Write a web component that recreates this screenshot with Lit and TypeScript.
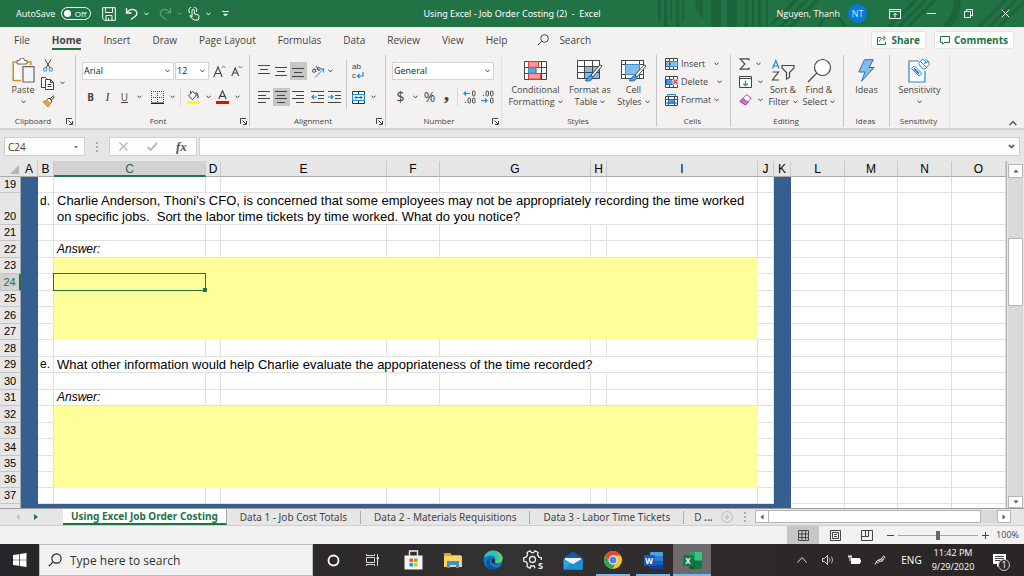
import { LitElement, html, svg, css, nothing, TemplateResult } from "lit";
import { customElement, state } from "lit/decorators.js";
import { classMap } from "lit/directives/class-map.js";

const icon = (w: number, h: number, body: TemplateResult) =>
  html`<svg width=${w} height=${h} viewBox="0 0 ${w} ${h}" fill="none" stroke="#444" aria-hidden="true">${body}</svg>`;

const chev = (color = "#444") =>
  html`<svg width="5" height="4" viewBox="0 0 5 4" fill="none" stroke=${color} aria-hidden="true"><path d="M0.5 0.7 2.5 2.9 4.5 0.7" /></svg>`;

const launcher = () =>
  icon(7, 7, svg`<path d="M0.5 6V0.5H6M2.5 2.5 6 6M6.5 3v3.5H3" />`);

const alignLines = (rows: number[][]) =>
  icon(13, 12, svg`${rows.map(([x1, x2, y]) => svg`<path d="M${x1} ${y}.5H${x2}" />`)}`);

const indent = (right: boolean) =>
  icon(13, 12, svg`<path d="M0 .5h13M7 4.5h6M7 7.5h6M0 11.5h13" />
    <path stroke="#1e88d8" stroke-width="1.2" d=${right ? "M0 6h5M3 4l2 2-2 2" : "M6 6H1M3 4 1 6l2 2"} />`);

const I = {
  save: icon(14, 14, svg`<g stroke="#fff"><path d="M.7.7h12.6v12.6H2.5L.7 11.5z" /><path d="M3.5 1v4.5h7V1M4 13V8.5h6V13M6.5 13v-2" /></g>`),
  undo: icon(14, 13, svg`<path stroke="#fff" stroke-width="1.3" d="M1.5 1v5h5M1.7 5.7C4 2.5 8 1.500 10.500 3.500c2 1.800 1.800 4.500-.5 6L6 12.500" />`),
  redo: icon(14, 13, svg`<path stroke="#5f9f7a" stroke-width="1.2" d="M12.500 1v5h-5M12.300 5.700C10 2.500 6 1.500 3.500 3.500c-2 1.800-1.800 4.500.5 6l4 3" />`),
  touch: icon(12, 14, svg`<g stroke="#fff"><path d="M1.700 6A4 4 0 1 1 8.500 5M4 10V3.500a1.200 1.200 0 0 1 2.400 0V7l3.600.8c1 .3 1.200 1 1 2L10.300 13H6L2 9.500c-.5-.8.500-1.500 1.200-1z" /></g>`),
  customize: icon(7, 6, svg`<g stroke="#fff"><path d="M0 .5h7" /><path fill="#fff" d="M1.500 3h4L3.500 5z" stroke-width=".6" /></g>`),
  ribbonMode: icon(12, 10, svg`<g stroke="#fff"><path d="M.5.500h11v9H.500zM.5 2.500h11M6 8.500V4.500M4.300 6 6 4.300 7.700 6" /></g>`),
  minimize: icon(9, 9, svg`<path stroke="#fff" d="M0 4.500h9" />`),
  restore: icon(9, 9, svg`<path stroke="#fff" d="M.5 2.500h6v6h-6zM2.500 2.500v-2h6v6h-2" />`),
  close: icon(9, 9, svg`<path stroke="#fff" d="m.7.7 7.600 7.600m0-7.600L.7 8.300" />`),
  search: icon(12, 12, svg`<circle cx="7.500" cy="4.500" r="3.800" /><path d="M4.800 7.200.7 11.300" />`),
  share: icon(10, 10, svg`<path stroke="#217346" d="M4 2.500H.500v7h8V7M2.500 6.500c.5-2.500 2-3.500 4.500-3.500M6 .7 8.500 3 6 5.300" />`),
  comment: icon(10, 9, svg`<path stroke="#217346" d="M.5.500h9v6H4L2.500 8.300V6.500h-2z" />`),
  paste: icon(23, 26, svg`<path stroke="#e08a1e" stroke-width="1.600" d="M5 4H1.200v18.500H9M14 4h4.800v3" fill="#fff" /><path fill="#fff" stroke="#666" d="M5 2.500h2.500a2.500 2.500 0 0 1 5 0H15V6H5z" /><path fill="#f5f5f5" stroke="#666" stroke-width="1.200" d="M11 8.600h11V24H11z" />`),
  cut: icon(10, 13, svg`<path d="M2 .5 7 9M8 .5 3 9" /><g stroke="#1e88d8"><circle cx="2.200" cy="10.500" r="1.700" /><circle cx="7.800" cy="10.500" r="1.700" /></g>`),
  copy: icon(14, 13, svg`<path fill="#fff" d="M6.500 10.500h-6V.500h4l2 2" /><path fill="#fff" d="M4.500 2.500h5l3 3v7h-8zM9.500 2.500v3h3M6.500 7.500h4M6.500 9.500h4" />`),
  brush: icon(13, 13, svg`<path fill="#f3a33c" stroke="#d9822b" d="M1 6.500 5.500 5 9 8l-3 4z" /><path fill="#fff" d="M5 4.500 7 3l3 3-1.500 2M8.200 4 11 .7l1.300 1.200-3 3.200" />`),
  borders: icon(13, 13, svg`<path stroke-dasharray="1 1" d="M0 .5h12.500v12M.5 0v12M6.500 0v12M0 6.500h13" /><path stroke="#222" stroke-width="1.500" d="M0 12.300h13" />`),
  fill: icon(13, 14, svg`<path fill="#fff" d="M5.500 1.500 1.500 6l4 3.500 4-4.500zM3.500 3V.7" /><path stroke="#1e68b8" stroke-width="1.400" d="M8.500 3c2 0 2.500 1.500 2.500 5" /><path fill="#ffff00" stroke="none" d="M0 11h13v3H0z" />`),
  fontColor: icon(13, 14, svg`<path stroke-width="1.200" d="M2.800 9 6.500.8 10.200 9M4 6.300h5" /><path fill="#f00" stroke="none" d="M0 11h13v3H0z" />`),
  grow: icon(13, 13, svg`<path stroke-width="1.100" d="M.8 12 5 2l4.200 10M2.300 8.500h5.500" /><path stroke="#1e88d8" d="m8.500 3 2-2 2 2" />`),
  shrink: icon(12, 12, svg`<path stroke-width="1.100" d="M.8 11 4.200 3l3.500 8M2 8h4.500" /><path stroke="#1e88d8" d="m7.500 1 2 2 2-2" />`),
  orient: icon(14, 13, svg`<g stroke-width=".9"><circle cx="3" cy="5.800" r="1.600" /><path d="M3.500 3.500 5 7M5 1l3 4.500" /><circle cx="7.600" cy="3.800" r="1.500" /></g><path stroke="#1e88d8" d="M4 12.500 12.500 4M9 3.800h3.700V7.500" />`),
  wrap: html`<span class="wrapicon" aria-hidden="true"><span>ab</span><span>c<svg width="8" height="7" viewBox="0 0 8 7" fill="none" stroke="#1e88d8" stroke-width="1.200"><path d="M7 0v4H1.500M3.500 2l-2 2 2 2" /></svg></span></span>`,
  merge: icon(13, 13, svg`<path d="M.5.500h12v12H.500z" fill="#fff" stroke="#333" /><path stroke="#333" d="M6.500 0v3M6.500 10v3" /><path fill="#e6f2fb" stroke="#1e88d8" d="M.5 3.500h12v6H.500z" /><path stroke="#1e68b8" d="M3 6.500h7M4.500 5 3 6.500 4.500 8M8.500 5 10 6.500 8.500 8" />`),
  cond: icon(23, 19, svg`<path fill="#fff" d="M.5.500h22v18H.500zM.5 6.500h22M.5 12.500h22M5.500 0v18M17.500 0v18M12 0v18" /><path fill="#ff9a9a" stroke="#e03c3c" d="M4.500.7h10v5.600h-10zM4.500 12.600h12v5.600h-12z" /><path fill="#5ba9e6" stroke="#3a8fd4" d="M4.500 6.800h7v5.400h-7z" />`),
  fmtTable: icon(25, 22, svg`<path fill="#fff" d="M.5.500h22v18H.500z" /><path fill="#84bdec" stroke="none" d="M7 7h16v12H7z" /><path d="M.5.500h22v18H.500zM0 6.500h22M0 12.500h22M7.500 0v18M15.500 0v18" /><path fill="#fff" d="m23 5-9 10 2 2 9-11z" /><path fill="#4a9ee0" stroke="#1e68b8" d="M13.500 15.500c-2 0-2.500 3-5.500 5 3 1 7 .5 8-3z" />`),
  cellStyles: icon(25, 22, svg`<path fill="#fff" d="M.5.500h22v18H.500z" /><path d="M.5.500h22v18H.500zM0 4.500h22M4.500 0v18M0 14.500h22M18.500 0v18" /><path fill="#84bdec" stroke="#3a8fd4" d="M4.500 4.500h14v10h-14z" /><path fill="#fff" d="m23 5-9 10 2 2 9-11z" /><path fill="#4a9ee0" stroke="#1e68b8" d="M13.500 15.500c-2 0-2.500 3-5.500 5 3 1 7 .5 8-3z" />`),
  insert: icon(13, 12, svg`<path fill="#fff" d="M.5.500h12v11H.500zM0 3.500h13M0 8.500h13M4.500 0v12M8.500 0v12" /><path fill="#84bdec" stroke="#3a8fd4" d="M5 3.500h7.500v5H5z" /><path stroke="#1e68b8" d="M6 6H.700M2.700 4l-2 2 2 2" />`),
  remove: icon(13, 12, svg`<path fill="#fff" d="M.5.500h12v11H.500zM0 3.500h13M0 8.500h13M4.500 0v12M8.500 0v12" /><path fill="#4a9ee0" stroke="#1e68b8" d="M1.500 3.500h6v5h-6z" /><path stroke="#f3f2f1" stroke-width="3.500" d="m8 3.500 5 5m0-5-5 5" /><path stroke="#e03c3c" stroke-width="1.300" d="m8.500 3.500 4 4.500m0-4.500-4 4.500" />`),
  format: icon(13, 13, svg`<path stroke="#1e88d8" d="M2.500 2.500V.5h8v2" /><path fill="#fff" d="M.5 2.500h12v9H.500zM0 5.500h13M0 9h13M3.500 2v10M9.500 2v10" /><path fill="#4a9ee0" stroke="#1e68b8" d="M3.500 5.500h6V9h-6z" />`),
  sum: icon(11, 12, svg`<path stroke-width="1.200" d="M10 2.500V.800H1L5.800 6 1 11.200h9V9.500" />`),
  fillDown: icon(13, 12, svg`<path fill="#fff" d="M.5.500h12v11H.500zM0 2.500h13" /><path stroke="#1e88d8" stroke-width="1.200" d="M6.500 4.500v5M4.300 7.500l2.200 2.200 2.200-2.200" />`),
  eraser: icon(13, 12, svg`<path fill="#fff" stroke="#a64ca6" d="M7.500.7 12.300 4 6.500 11 1 7.500z" /><path fill="#c77bc7" stroke="#a64ca6" d="M4 4.500 9 8.200 6.500 11 1 7.500z" />`),
  sort: icon(24, 23, svg`<path stroke="#1e88d8" stroke-width="1.200" d="M1.500 9.500 4.800 1.500 8 9.500M2.800 7h4" /><path stroke-width="1.200" d="M1.500 13h6l-6 8H8" /><path stroke-width="1.200" d="M11 6.500h12V9l-4.500 4.500v5l-3 1.500v-6.500L11 9z" />`),
  find: icon(25, 25, svg`<circle cx="15.500" cy="9.500" r="8" stroke-width="1.200" fill="#fff" /><path stroke-width="1.200" d="M9.700 15.200 1 24" />`),
  ideas: icon(17, 23, svg`<path fill="#84bdec" stroke="#1e78c8" d="M6.500.700h8.800L11 8.500h5.200L3.500 22.300 7 13H.800z" />`),
  sens: icon(22, 25, svg`<path fill="#fff" stroke="#1e88d8" stroke-width="1.200" d="M11 3H1v21h16V13" /><g stroke="#1e88d8"><path fill="#fff" d="m3.500 10.500 3-2.500 7.500 7.500-3 2.500z" /><path stroke="#1e78c8" stroke-width="1.800" d="m6 10.700 5 5" /><path fill="#fff" d="M10.500 5.500 14.500 1l3 2.500-1 2 4-2 .8 3-4.300 4.500-3-.5z" /><path d="m12.500 3.500 6 6M17.500 1l3 3" /></g>`),
  collapse: icon(8, 6, svg`<path stroke-width="1.200" d="m.7 5 3.300-3.500L7.300 5" />`),
};

const task = {
  windows: icon(14, 14, svg`<path fill="#fff" stroke="none" d="M0 2l6-.8v5.500H0zM6.700 1.100 13.500 0v6.700H6.700zM0 7.300h6v5.500L0 12zM6.700 7.300h6.800V14l-6.800-1z" />`),
  cortana: icon(13, 13, svg`<circle cx="6.500" cy="6.500" r="5" stroke="#fff" stroke-width="1.800" />`),
  view: icon(14, 12, svg`<g stroke="#ddd"><path d="M.5 0v1.500h8V0M.5 12v-1.500h8V12M.5 3.500h8v5h-8zM11.500 0v12" /><path fill="#ddd" d="M11 3.500h1.500v1.500H11z" /></g>`),
  store: icon(19, 20, svg`<path stroke="#eee" stroke-width="1.400" d="M5.500 6V1h8v5" /><path fill="#f3f3f3" stroke="none" d="M.5 5.500h18v14H.500z" /><path fill="#f25022" stroke="none" d="M5.500 8.500h3.500V12H5.500z" /><path fill="#7fba00" stroke="none" d="M10 8.500h3.500V12H10z" /><path fill="#00a4ef" stroke="none" d="M5.500 13H9v3.500H5.500z" /><path fill="#ffb900" stroke="none" d="M10 13h3.500v3.500H10z" />`),
  explorer: icon(18, 15, svg`<g stroke="none"><path fill="#e8a317" d="M0 0h6l2 2h9v4H0z" /><path fill="#fcd462" d="M0 3h18v11H0z" /><path fill="#3c8fd8" d="M3 8h12v7h-3v-3H6v3H3z" /></g>`),
  edge: icon(20, 20, svg`<g stroke="none"><circle cx="10" cy="10" r="9.500" fill="#1478c8" /><path fill="#35c1b1" d="M1 8C2 3 6 .5 10 .5c5.500 0 9.500 4 9.500 8 0 3-2.500 4.500-5 4.500-2 0-3-.8-2.500-1.600C13.500 8 11 5.500 8 5.500 5 5.500 2 6.500 1 8z" /><path fill="#5fd35f" d="M12 1c4.500 1 7.500 4 7.500 7.500 0 3-2.500 4.500-5 4.500-1 0-2-.3-2.500-.8C18 11 17 5 12 1z" /><path fill="#0d4f9e" d="M8 8c-2.500 2-2 7 2 9 3 1.300 6 .5 8-1.500-4 5-10 5-13.500 1C2 13 4 8.500 8 8z" /><path fill="#2b2a2c" d="M9 9c2-1.300 3.500.7 2.800 2.500-.5 1.200 1 2 2.700 1.800-2.500 1-6 0-6-2.300 0-1 .2-1.600.5-2z" /></g>`),
  settings: html`<span class="gear"><svg width="20" height="20" viewBox="0 0 20 20" fill="none" stroke="#eee" stroke-width="1.300" aria-hidden="true"><circle cx="9.500" cy="9.500" r="3" /><path d="M12 18.200l-.8-2.200H7.800l-.8 2.200-3-1.700.6-2.300-1.500-2.400L.8 11.300V7.800l2.300-.6 1.500-2.400L4 2.500l3-1.700 1.500 1.800h2l1.600-1.800 3 1.700-.6 2.300 1.500 2.400 2.300.6V10" /></svg><b>S</b></span>`,
  mail: icon(20, 19, svg`<g stroke="none"><path fill="#0f5fae" d="M.5 7 10 .5 19.500 7v5H.500z" /><path fill="#f5f5f5" d="M2 7h16v7H2z" /><path fill="#28a8ea" d="M.5 7.500 10 13.500l9.500-6V18.500H.500z" /><path fill="#1b8fd8" d="m.5 18.500 8-6.500 1.500 1.200 9.500-5.700v11z" /></g>`),
  chrome: icon(18, 18, svg`<g stroke="none"><circle cx="9" cy="9" r="9" fill="#f7c52d" /><path fill="#e2483a" d="M1.200 4.500A9 9 0 0 1 16.800 4.500H9A4.500 4.500 0 0 0 5 11z" /><path fill="#2ea457" d="M1.200 4.500 5.100 11.300A4.500 4.500 0 0 0 11 13l-2.500 5A9 9 0 0 1 1.200 4.500z" /><circle cx="9" cy="9" r="4.400" fill="#fff" /><circle cx="9" cy="9" r="3.500" fill="#4a86e8" /></g>`),
};

interface Row { n: number; h: number; kind?: "d" | "e" | "answer" | "fill" }
const ROWS: Row[] = [
  { n: 19, h: 16 }, { n: 20, h: 32, kind: "d" }, { n: 21, h: 16 }, { n: 22, h: 17, kind: "answer" },
  { n: 23, h: 16, kind: "fill" }, { n: 24, h: 17, kind: "fill" }, { n: 25, h: 16, kind: "fill" },
  { n: 26, h: 17, kind: "fill" }, { n: 27, h: 16, kind: "fill" }, { n: 28, h: 17 }, { n: 29, h: 16, kind: "e" },
  { n: 30, h: 17 }, { n: 31, h: 16, kind: "answer" }, { n: 32, h: 17, kind: "fill" }, { n: 33, h: 16, kind: "fill" },
  { n: 34, h: 17, kind: "fill" }, { n: 35, h: 16, kind: "fill" }, { n: 36, h: 16, kind: "fill" }, { n: 37, h: 16 },
];
const COLS: [string, number][] = [
  ["A", 17], ["B", 16], ["C", 152], ["D", 15], ["E", 166], ["F", 53], ["G", 151], ["H", 16],
  ["I", 151], ["J", 16], ["K", 17], ["L", 54], ["M", 53], ["N", 54], ["O", 54],
];

@customElement("app-root")
export class AppRoot extends LitElement {
  @state() private active = "Home";

  static styles = css`
    :host { display: flex; flex-direction: column; height: 100vh; overflow: hidden; background: #e6e6e6; color: #444; font: 10px/12px "Open Sans", "Noto Sans", sans-serif; }
    * { box-sizing: border-box; }
    button, input, select { font: inherit; color: inherit; background: none; border: 0; padding: 0; margin: 0; min-width: 0; border-radius: 0; outline: 0; }
    button { display: flex; align-items: center; justify-content: center; flex: none; white-space: pre; }
    svg { flex: none; display: block; }

    .title { flex: none; height: 27px; display: grid; grid-template-columns: 1fr auto 1fr; align-items: center; background: #217346; color: #fff; position: relative; font-size: 9px; overflow: hidden; }
    .title > * { position: relative; }
    .title > .deco { position: absolute; right: 0; top: 0; }
    .quick { display: flex; align-items: center; padding-left: 16px; }
    .auto { display: flex; align-items: center; gap: 6px; font-size: 9px; margin-right: 9px; }
    .toggle { width: 30px; height: 13px; border: 1px solid #fff; border-radius: 7px; font-size: 8px; justify-content: space-between; padding: 0 4px 0 2px; }
    .toggle i { width: 7px; height: 7px; border-radius: 50%; background: #fff; }
    .w8 { width: 8px; } .w12 { width: 12px; } .w17 { width: 17px; } .w22 { width: 22px; } .w37 { width: 37px; }
    .docname { white-space: pre; font: 9px/12px "Noto Sans", sans-serif; }
    .account { display: flex; align-items: center; justify-content: flex-end; }
    .avatar { width: 19px; height: 19px; border-radius: 50%; background: #0a78d4; color: #cfe6fb; display: grid; place-items: center; margin: 0 9px 0 8px; font-size: 9px; }

    .menu { flex: none; height: 26px; display: flex; align-items: center; gap: 22px; padding: 0 10px 0 14px; background: #f3f2f1; }
    .menu .tab { height: 20px; border-bottom: 2px solid transparent; border-top: 2px solid transparent; }
    .menu .tab.on { font-weight: 700; border-bottom-color: #217346; }
    .find { display: flex; align-items: center; gap: 10px; margin-left: 8px; flex: 1; }
    .find input { width: 60px; }
    .find input::placeholder { color: #444; opacity: 1; }
    .actions { display: flex; gap: 8px; }
    .action { height: 18px; padding: 0 5px; gap: 4px; background: #fff; border: 1px solid #e6e4e2; border-radius: 2px; color: #217346; font-weight: 700; }

    .ribbon { flex: none; height: 77px; display: flex; background: #f3f2f1; border-bottom: 2px solid #d2d0ce; padding-top: 2px; font-size: 9px; }
    .group { flex: none; display: flex; flex-direction: column; border-right: 1px solid #c8c6c4; margin-bottom: 1px; }
    .group.faint { border-right-color: #e4e2e0; }
    .body { flex: 1; display: flex; min-height: 0; }
    .foot { height: 12px; display: flex; align-items: center; font-size: 8px; line-height: 10px; padding-right: 2px; }
    .foot span { flex: 1; text-align: center; }
    .clip { width: 76px; } .font { width: 174px; } .align { width: 136px; } .num { width: 116px; }
    .styles { width: 155px; } .cells { width: 74px; } .edit { width: 113px; } .ideas { width: 46px; } .sensg { width: 60px; }
    .inset { padding-left: 6px; }
    .alignl { width: 90px; }
    .lead { width: 9px; }
    .spread { justify-content: space-evenly; }
    .lefty { padding-left: 8px; }
    .stack { display: flex; flex-direction: column; padding-top: 7px; gap: 8px; }
    .line { display: flex; align-items: center; height: 18px; }
    .line button { height: 18px; }
    .line button.pressed { background: #c8c6c4; }
    .gap2 { margin-left: 2px; } .gap4 { margin-left: 4px; } .gap6 { margin-left: 6px; }
    .rule { width: 1px; align-self: stretch; background: #dcdad8; margin: 0 2px; }
    .vrule { width: 1px; background: #c8c6c4; margin: 5px 0 6px; }
    .pick { display: grid; align-items: center; background: #fff; border: 1px solid #d6d4d2; height: 18px; }
    .pick select { grid-area: 1/1; appearance: none; width: 100%; height: 16px; padding-left: 1px; color: #222; }
    .pick svg { grid-area: 1/1; justify-self: end; margin-right: 3px; pointer-events: none; }
    .name { width: 92px; } .size { width: 34px; margin-left: 1px; } .general { width: 102px; }
    .b { font-weight: 700; } .u { text-decoration: underline; }
    .line .b, .line .u { font-size: 10px; } .line .i { font: italic 12px "Liberation Serif", serif; }
    .sym { font-size: 14px; } .comma { font: 700 22px/8px "Liberation Serif", serif; padding-bottom: 8px; }
    .wrapicon { display: flex; flex-direction: column; font: 8px/9px "Liberation Sans", sans-serif; }
    .wrapicon span { display: flex; align-items: center; height: 9px; }
    .big { flex-direction: column; justify-content: flex-start; padding-top: 2px; line-height: 12px; }
    .big .pic { height: 27px; display: grid; place-items: center; }
    .big .cap { display: flex; align-items: center; justify-content: center; gap: 3px; height: 12px; }
    .bpaste { width: 28px; }
    .medium { width: 36px; }
    .side { display: flex; flex-direction: column; }
    .side button { height: 18px; gap: 3px; justify-content: flex-start; }
    .side button .c { margin-left: 3px; }
    .cuts { padding: 1px 0 0 4px; }
    .cuts button { width: 14px; justify-content: center; }
    .tail { flex: 1; display: flex; justify-content: flex-end; align-items: flex-end; padding: 0 7px 2px; }

    .formula { flex: none; height: 31px; display: flex; align-items: flex-start; padding: 7px 4px 0; }
    .formula > div { height: 19px; background: #fdfdfd; border: 1px solid #d0d0d0; }
    .formula .box { width: 81px; display: flex; align-items: center; padding: 0 5px 0 3px; }
    .formula .box input { flex: 1; }
    .formula .dots { width: 24px; background: none; border: 0; display: grid; place-items: center; }
    .formula .fx { width: 88px; display: flex; justify-content: space-around; align-items: center; margin-right: 2px; }
    .fx .f { font: italic 700 13px "Liberation Serif", serif; color: #555; }
    .formula .entry { flex: 1; display: flex; align-items: center; padding-right: 4px; min-width: 0; }
    .entry input { flex: 1; }

    .work { flex: 1; min-height: 0; display: flex; }
    .sheet { flex: 1; min-width: 0; overflow: hidden; background: #fff; border-right: 1px solid #b5b5b5; }
    table { border-collapse: separate; border-spacing: 0; table-layout: fixed; width: 100%; font: 12px/15px "Liberation Sans", Arial, sans-serif; color: #000; }
    th, td { padding: 0; vertical-align: bottom; overflow: visible; white-space: pre; }
    td { border-right: 1px solid #e0e0e0; border-bottom: 1px solid #e0e0e0; }
    thead th { height: 16px; line-height: 13px; background: #e6e6e6; font-weight: 400; border-right: 1px solid #c9c9c9; border-bottom: 1px solid #ababab; }
    thead th.sel { background: #d2d2d2; color: #217346; border-bottom: 2px solid #217346; line-height: 12px; }
    thead th.corner { border-right: 0; }
    .corner svg { margin: 0 2px 2px auto; }
    tbody th { background: #e6e6e6; font-weight: 400; font-size: 11px; border-bottom: 1px solid #c4c4c4; border-right: 1px solid #ababab; text-align: center; }
    tbody th div, td > div { height: 15px; line-height: 15px; }
    tbody th.sel { background: #d2d2d2; color: #217346; border-right: 2px solid #217346; }
    td.blue { background: #365f91; border-color: #365f91; }
    td.fill { background: #ffff99; border-color: #ffff99; }
    td.note { padding-left: 3px; font-size: 13px; }
    td.note > div { line-height: 16px; }
    td.note.two > div { height: 31px; }
    td.mark { text-align: right; padding-right: 3px; font-size: 12px; }
    td.mark.high { vertical-align: top; }
    td.mark.high > div { line-height: 16px; }
    td.ans { font-style: italic; padding-left: 3px; }
    td.cur { position: relative; }
    td > .cursor { position: absolute; inset: -1px -1px -1px -1px; border: 1px solid #217346; height: auto; }
    .cursor::after { content: ""; position: absolute; right: -2px; bottom: -2px; width: 4px; height: 4px; background: #217346; }

    .vbar { flex: none; width: 15px; margin: 3px 1px 0 1px; display: flex; flex-direction: column; background: #d9d9d9; }
    .vbar button, .hbar button { background: #fff; border: 1px solid #b5b5b5; }
    .vbar .end { height: 14px; } .vbar .thumb { height: 68px; margin-top: 60px; } .vbar .last { margin-top: auto; height: 12px; }

    .sheets { flex: none; height: 18px; display: flex; border-top: 1px solid #9c9c9c; border-bottom: 1px solid #cfcfcf; align-items: stretch; font-family: "Noto Sans", sans-serif; }
    .sheets .nav { width: 18px; }
    .tabs { display: flex; flex: 1; min-width: 0; padding-left: 18px; }
    .tabs button { padding: 0 13px; border-right: 1px solid #ababab; height: 13px; align-self: center; }
    .tabs button.on { padding: 0 8px; background: #fff; color: #217346; font-weight: 700; align-self: stretch; height: auto; border-bottom: 2px solid #217346; }
    .tabs button.end { border: 0; padding: 0 0 0 10px; }
    .tabs b { color: #217346; }
    .tabs button.add { border: 0; padding: 0; width: 28px; }
    .tabs .grip { width: 8px; display: grid; place-items: center; }
    .hbar { flex: none; width: 25%; min-width: 120px; display: flex; margin: 1px 13px 2px 0; background: #d9d9d9; }
    .hbar .arrow { width: 14px; } .hbar .thumb { flex: 1; border-left: 0; margin-right: 16px; }

    .status { flex: none; height: 18px; display: flex; align-items: center; justify-content: flex-end; background: #f3f2f1; font-size: 9px; padding-right: 5px; }
    .status button { width: 32px; height: 18px; }
    .status button.on { background: #c8c6c4; }
    .status button.step { width: 15px; }
    .status input { appearance: none; width: 80px; height: 10px; background: linear-gradient(#a6a6a6, #a6a6a6) center/100% 1px no-repeat; }
    .status input::-webkit-slider-thumb { appearance: none; width: 4px; height: 9px; background: #666; }
    .status output { width: 26px; text-align: right; }

    .taskbar { flex: none; height: 32px; display: flex; align-items: stretch; background: linear-gradient(90deg, #26272a, #2e2a2b 35%, #333 50%, #2e2928 70%, #2a2626 100%); color: #fff; }
    .start { width: 39px; }
    .tsearch { display: flex; align-items: center; gap: 8px; width: 274px; background: #f2f2f2; border: 1px solid #bdbdbd; padding-left: 8px; }
    .tsearch input { flex: 1; font-size: 12px; }
    .tsearch input::placeholder { color: #333; opacity: 1; }
    .app { width: 40px; }
    .app.run { border-bottom: 2px solid #76b9ed; border-top: 2px solid transparent; width: 34px; margin: 0 3px; }
    .app.front { background: #6c6a6a; border-top-color: #6c6a6a; width: 38px; margin: 0; }
    .office { display: flex; align-items: center; }
    .office b { width: 11px; height: 11px; font-size: 8px; line-height: 11px; color: #fff; background: #1b5cbe; z-index: 1; border-radius: 1px; text-align: center; }
    .office i { width: 13px; height: 17px; margin-left: -5px; background: linear-gradient(#41a5ee 25%, #2b7cd3 25% 50%, #185abd 50% 75%, #103f91 75%); border-radius: 1px; }
    .office.xl b { background: #107c41; } .office.xl i { background: linear-gradient(90deg, #21a366 50%, #33c481 50%) top/100% 50% no-repeat, linear-gradient(90deg, #185c37 50%, #107c41 50%); }
    .gear { position: relative; display: block; }
    .gear b { position: absolute; right: 0; bottom: 0; font-size: 9px; line-height: 9px; }
    .tray { margin-left: auto; display: flex; align-items: center; padding-right: 2px; }
    .tray button { width: 26px; height: 32px; }
    .tray .lang { width: 37px; }
    .tray .clock { width: 46px; flex-direction: column; line-height: 14px; font-size: 9px; }
    .tray .note { width: 46px; position: relative; }
    .badge { position: absolute; left: 22px; top: 15px; width: 12px; height: 12px; border-radius: 50%; border: 1px solid #ccc; background: #2e2b2b; font-size: 9px; line-height: 10px; text-align: center; }
  `;

  private pick(cls: string, label: string, value: string) {
    return html`<label class="pick ${cls}"><select aria-label=${label}><option>${value}</option></select>${chev()}</label>`;
  }

  private big(pic: TemplateResult, one: string, two: string | null, cls: string) {
    return html`<button class="big ${cls}"><span class="pic">${pic}</span><span class="cap">${one}</span>${two === null ? nothing : html`<span class="cap">${two}${chev()}</span>`}</button>`;
  }

  private ribbon() {
    return html`<section class="ribbon" aria-label="Ribbon">
      <div class="group clip"><div class="body">
        <div class="lead"></div>
        ${this.big(I.paste, "Paste", "", "bpaste")}
        <div class="side cuts">
          <div class="line"><button aria-label="Cut">${I.cut}</button></div>
          <div class="line"><button aria-label="Copy">${I.copy}</button><button class="w12" aria-label="Copy options">${chev()}</button></div>
          <div class="line"><button aria-label="Format Painter">${I.brush}</button></div>
        </div></div>
        <div class="foot"><span>Clipboard</span>${launcher()}</div></div>
      <div class="group font"><div class="body stack inset">
        <div class="line">${this.pick("name", "Font", "Arial")}${this.pick("size", "Font size", "12")}
          <button class="w17 gap2" aria-label="Increase font size">${I.grow}</button><button class="w17" aria-label="Decrease font size">${I.shrink}</button></div>
        <div class="line"><button class="w17 b">B</button><button class="w17 i">I</button><button class="w17 u">U</button><button class="w12" aria-label="Underline options">${chev()}</button>
          <button class="w17 gap4" aria-label="Borders">${I.borders}</button><button class="w12" aria-label="Border options">${chev()}</button><span class="rule"></span>
          <button class="w17 gap2" aria-label="Fill colour">${I.fill}</button><button class="w12" aria-label="Fill options">${chev()}</button>
          <button class="w17" aria-label="Font colour">${I.fontColor}</button><button class="w12" aria-label="Font colour options">${chev()}</button></div>
      </div><div class="foot"><span>Font</span>${launcher()}</div></div>
      <div class="group align"><div class="body inset">
        <div class="stack alignl">
          <div class="line"><button class="w17" aria-label="Top">${alignLines([[0, 12, 0], [2, 10, 4], [0, 12, 8]])}</button><button class="w17" aria-label="Middle">${alignLines([[0, 12, 2], [2, 10, 6], [0, 12, 10]])}</button><button class="w17 pressed" aria-label="Bottom">${alignLines([[0, 12, 3], [2, 10, 7], [0, 12, 11]])}</button>
            <button class="w17 gap2" aria-label="Orientation">${I.orient}</button><button class="w8" aria-label="Orientation options">${chev()}</button></div>
          <div class="line"><button class="w17" aria-label="Left">${alignLines([[0, 12, 0], [0, 8, 4], [0, 12, 7], [0, 8, 11]])}</button><button class="w17 pressed" aria-label="Centre">${alignLines([[0, 12, 0], [2, 10, 4], [0, 12, 7], [2, 10, 11]])}</button><button class="w17" aria-label="Right">${alignLines([[0, 12, 0], [4, 12, 4], [0, 12, 7], [4, 12, 11]])}</button>
            <button class="w17 gap2" aria-label="Decrease indent">${indent(false)}</button><button class="w17" aria-label="Increase indent">${indent(true)}</button></div>
        </div><span class="vrule"></span>
        <div class="stack"><div class="line"><button class="w22" aria-label="Wrap text">${I.wrap}</button></div>
          <div class="line"><button class="w22" aria-label="Merge">${I.merge}</button><button class="w8" aria-label="Merge options">${chev()}</button></div></div>
      </div><div class="foot"><span>Alignment</span>${launcher()}</div></div>
      <div class="group num faint"><div class="body stack inset">
        <div class="line">${this.pick("general", "Number format", "General")}</div>
        <div class="line"><button class="w17 sym">$</button><button class="w12" aria-label="Currency options">${chev()}</button><button class="w17 sym">%</button><button class="w17 comma">,</button><span class="rule"></span>
          <button class="w17 gap2" aria-label="Increase decimal">${this.decimals(true)}</button><button class="w17" aria-label="Decrease decimal">${this.decimals(false)}</button></div>
      </div><div class="foot"><span>Number</span>${launcher()}</div></div>
      <div class="group styles"><div class="body spread">
        ${this.big(I.cond, "Conditional", "Formatting", "")}${this.big(I.fmtTable, "Format as", "Table", "")}${this.big(I.cellStyles, "Cell", "Styles", "")}
      </div><div class="foot"><span>Styles</span></div></div>
      <div class="group cells"><div class="body side lefty">
        <button>${I.insert}Insert <span class="c">${chev()}</span></button><button>${I.remove}Delete <span class="c">${chev()}</span></button><button>${I.format}Format<span>${chev()}</span></button>
      </div><div class="foot"><span>Cells</span></div></div>
      <div class="group edit"><div class="body">
        <div class="side lefty">
          <button aria-label="AutoSum">${I.sum}<span class="c">${chev()}</span></button><button aria-label="Fill">${I.fillDown}<span class="c">${chev()}</span></button><button aria-label="Clear">${I.eraser}<span class="c">${chev()}</span></button>
        </div>${this.big(I.sort, "Sort &", "Filter", "medium gap2")}${this.big(I.find, "Find &", "Select", "medium")}
      </div><div class="foot"><span>Editing</span></div></div>
      <div class="group ideas"><div class="body spread">${this.big(I.ideas, "Ideas", null, "")}</div><div class="foot"><span>Ideas</span></div></div>
      <div class="group sensg faint"><div class="body spread">${this.big(I.sens, "Sensitivity", "", "")}</div><div class="foot"><span>Sensitivity</span></div></div>
      <div class="tail"><button aria-label="Collapse ribbon">${I.collapse}</button></div>
    </section>`;
  }

  private decimals(more: boolean) {
    return html`<svg width="15" height="14" viewBox="0 0 15 14" fill="none" stroke="#444" aria-hidden="true">
      ${more
        ? svg`<path stroke="#1e88d8" stroke-width="1.200" d="M7 3.500H1M3 1.500l-2 2 2 2" /><rect x="9.500" y="1" width="2.500" height="5" rx="1.200" /><path d="M2 12.500h1" /><rect x="5" y="8" width="2.500" height="5" rx="1.200" /><rect x="9.500" y="8" width="2.500" height="5" rx="1.200" />`
        : svg`<path d="M3 5.500h1" /><rect x="6" y="1" width="2.500" height="5" rx="1.200" /><rect x="10.500" y="1" width="2.500" height="5" rx="1.200" /><path stroke="#1e88d8" stroke-width="1.200" d="M1 10.500h6M5 8.500l2 2-2 2" /><rect x="10.500" y="8" width="2.500" height="5" rx="1.200" />`}
    </svg>`;
  }

  private cell(row: Row, col: string) {
    if (col === "A" || col === "K") return html`<td class="blue"></td>`;
    if (col === "B" && (row.kind === "d" || row.kind === "e")) return html`<td class=${classMap({ mark: true, high: row.kind === "d" })}><div>${row.kind}.</div></td>`;
    if ("CDEFGHI".includes(col)) {
      if (row.kind === "d")
        return col === "C" ? html`<td class="note two" colspan="7"><div>Charlie Anderson, Thoni's CFO, is concerned that some employees may not be appropriately recording the time worked<br />on specific jobs.  Sort the labor time tickets by time worked. What do you notice?</div></td>` : nothing;
      if (row.kind === "e")
        return col === "C" ? html`<td class="note" colspan="7"><div>What other information would help Charlie evaluate the appopriateness of the time recorded?</div></td>` : nothing;
      if (row.kind === "answer" && col === "C") return html`<td class="ans"><div>Answer:</div></td>`;
      if (row.kind === "fill") {
        const cur = col === "C" && row.n === 24;
        return html`<td class=${classMap({ fill: true, cur })}>${cur ? html`<div class="cursor"></div>` : nothing}</td>`;
      }
    }
    return html`<td></td>`;
  }

  private sheet() {
    return html`<table>
      <colgroup><col style="width:21px" />${COLS.map(([, w]) => html`<col style="width:${w}px" />`)}<col /></colgroup>
      <thead><tr><th class="corner" aria-label="Select all">${icon(9, 9, svg`<path fill="#b4b4b4" stroke="none" d="M9 0v9H0z" />`)}</th>
        ${COLS.map(([c]) => html`<th class=${classMap({ sel: c === "C" })}>${c}</th>`)}<th></th></tr></thead>
      <tbody>
        ${ROWS.map((r) => html`<tr style="height:${r.h}px"><th class=${classMap({ sel: r.n === 24 })}><div>${r.n}</div></th>${COLS.map(([c]) => this.cell(r, c))}<td></td></tr>`)}
        <tr style="height:16px"><th></th><td class="blue" colspan="11"></td><td></td><td></td><td></td><td></td><td></td></tr>
      </tbody></table>`;
  }

  render() {
    const tabs = ["File", "Home", "Insert", "Draw", "Page Layout", "Formulas", "Data", "Review", "View", "Help"];
    const tri = (d: string, c = "#555") => icon(6, 6, svg`<path fill=${c} stroke="none" d=${d} />`);
    return html`
      <header class="title">
        <svg class="deco" width="370" height="27" viewBox="0 0 370 27" fill="#1c653c" aria-hidden="true">
          <path d="M4 0h3v20H4zM10 0h3v27h-3zM16 0h2v20h-2zM22 0h3v27h-3zM28 0h2v22h-2zM41 0h8v19q-8-8-8-19zM57 0h10v27H57zM73 0h10v27H73zM91 0h3v27h-3zM98 0h2v27h-2zM104 0h3v27h-3zM112 0h2v27h-2z" />
          <g fill="none" stroke="#1c653c" stroke-width="3"><circle cx="178" cy="28" r="12" /><path d="M118 24 142 0M126 27 153 0M136 27 163 0M235 27 262 0M245 27 272 0M254 27 281 0M325 27 352 0M335 27 362 0M345 27 370 2" /><path stroke-width="7" d="M303 0q1 18-12 27" /></g>
        </svg>
        <div class="quick"><span class="auto">AutoSave<button class="toggle" aria-label="AutoSave switch"><i></i>Off</button></span>
          <button class="w17" aria-label="Save">${I.save}</button><button class="w17 gap6" aria-label="Undo">${I.undo}</button><button class="w12" aria-label="Undo list">${chev("#fff")}</button>
          <button class="w17 gap4" aria-label="Redo">${I.redo}</button><button class="w12" aria-label="Redo list">${chev("#5f9f7a")}</button>
          <button class="w17" aria-label="Touch mode">${I.touch}</button><button class="w12" aria-label="Touch options">${chev("#fff")}</button><button class="w22" aria-label="Customize">${I.customize}</button></div>
        <div class="docname">Using Excel - Job Order Costing (2)  -  Excel</div>
        <div class="account"><span>Nguyen, Thanh</span><span class="avatar">NT</span>
          <button class="w37" aria-label="Ribbon display">${I.ribbonMode}</button><button class="w37" aria-label="Minimize">${I.minimize}</button><button class="w37" aria-label="Restore">${I.restore}</button><button class="w37" aria-label="Close">${I.close}</button></div>
      </header>
      <nav class="menu">${tabs.map((t) => html`<button class=${classMap({ tab: true, on: t === this.active })} @click=${() => (this.active = t)}>${t}</button>`)}
        <label class="find">${I.search}<input aria-label="Search" placeholder="Search" /></label>
        <div class="actions"><button class="action">${I.share}Share</button><button class="action">${I.comment}Comments</button></div></nav>
      ${this.ribbon()}
      <div class="formula">
        <div class="box"><input aria-label="Name box" value="C24" />${tri("M1 2h4L3 4.500z", "#777")}</div>
        <div class="dots">${icon(2, 10, svg`<path stroke="#aaa" stroke-width="2" stroke-dasharray="2 2" d="M1 0v10" />`)}</div>
        <div class="fx"><button aria-label="Cancel">${icon(9, 9, svg`<path stroke="#b5b5b5" stroke-width="1.300" d="m.5.500 8 8m0-8-8 8" />`)}</button><button aria-label="Enter">${icon(11, 9, svg`<path stroke="#b5b5b5" stroke-width="1.800" d="m.7 5 3 3L10 .800" />`)}</button><button class="f" aria-label="Insert function">fx</button></div>
        <div class="entry"><input aria-label="Formula" />${icon(7, 5, svg`<path stroke="#666" stroke-width="1.800" d="m1 1 2.500 2.500L6 1" />`)}</div>
      </div>
      <main class="work"><div class="sheet">${this.sheet()}</div>
        <div class="vbar"><button class="end" aria-label="Scroll up">${tri("M0.500 4.500h5L3 1.500z")}</button><button class="thumb" aria-label="Vertical position"></button><button class="last" aria-label="Scroll down">${tri("M0.500 1.500h5L3 4.500z")}</button></div></main>
      <div class="sheets"><span class="lead"></span><button class="nav" aria-label="Previous sheets">${tri("M4.500 0v6L1.500 3z", "#bbb")}</button><button class="nav" aria-label="Next sheets">${tri("M1 0v6L5 3z", "#217346")}</button>
        <div class="tabs"><button class="on">Using Excel Job Order Costing</button><button>Data 1 - Job Cost Totals</button><button>Data 2 - Materials Requisitions</button><button>Data 3 - Labor Time Tickets</button><button class="end">D <b>...</b></button>
          <button class="add" aria-label="New sheet">${icon(12, 12, svg`<g stroke="#bbb"><circle cx="6" cy="6" r="5.400" /><path d="M3 6h6M6 3v6" /></g>`)}</button><span class="grip">${icon(2, 10, svg`<path stroke="#aaa" stroke-width="2" stroke-dasharray="2 2" d="M1 0v10" />`)}</span></div>
        <div class="hbar"><button class="arrow" aria-label="Scroll left">${tri("M4.500 0.500v5L1.500 3z")}</button><button class="thumb" aria-label="Horizontal position"></button><button class="arrow" aria-label="Scroll right">${tri("M1.500 0.500v5L4.500 3z")}</button></div></div>
      <footer class="status">
        <button class="on" aria-label="Normal view">${icon(11, 11, svg`<path d="M.5.500h10v10H.500zM0 4h11M0 7.500h11M4 0v11M7.500 0v11" />`)}</button><button aria-label="Page layout view">${icon(11, 11, svg`<path d="M.5.500h10v10H.500zM2.500 2.500h6v6h-6zM4 4.500h3M4 6.500h3" />`)}</button><button aria-label="Page break view">${icon(12, 11, svg`<path d="M.5.500h11v10H.500zM4.500 0v6.500H.500M7.500 0v6.500h-3" />`)}</button>
        <button class="step" aria-label="Zoom out">${icon(7, 7, svg`<path d="M0 3.500h7" />`)}</button><input type="range" aria-label="Zoom" min="10" max="190" value="100" /><button class="step" aria-label="Zoom in">${icon(7, 7, svg`<path d="M0 3.500h7M3.500 0v7" />`)}</button><output>100%</output></footer>
      <div class="taskbar"><button class="start" aria-label="Start">${task.windows}</button>
        <label class="tsearch">${icon(14, 14, svg`<circle cx="8.500" cy="5.500" r="4.600" stroke="#222" stroke-width="1.200" /><path stroke="#222" stroke-width="1.200" d="M5.200 8.800.8 13.200" />`)}<input aria-label="Type here to search" placeholder="Type here to search" /></label>
        <button class="app" aria-label="Cortana">${task.cortana}</button><button class="app" aria-label="Task view">${task.view}</button><button class="app" aria-label="Store">${task.store}</button><button class="app" aria-label="File Explorer">${task.explorer}</button><button class="app" aria-label="Edge">${task.edge}</button><button class="app" aria-label="Settings">${task.settings}</button><button class="app" aria-label="Mail">${task.mail}</button><button class="app run" aria-label="Chrome">${task.chrome}</button>
        <button class="app run" aria-label="Word"><span class="office"><b>W</b><i></i></span></button><button class="app run front" aria-label="Excel"><span class="office xl"><b>X</b><i></i></span></button>
        <div class="tray"><button aria-label="Hidden icons">${icon(10, 6, svg`<path stroke="#ddd" d="m.5 5.500 4.500-5 4.500 5" />`)}</button><button aria-label="Volume">${icon(12, 10, svg`<path stroke="#ddd" d="M.5 3.500h2l3-3v9l-3-3h-2z" /><path stroke="#aaa" d="M7.500 3q1.200 2 0 4M9.500 1.500q2.200 3.500 0 7" />`)}</button>
          <button aria-label="Battery">${icon(13, 10, svg`<path fill="#fff" stroke="none" d="M3 3h9v6H3zM12 4.500h1v3h-1z" /><path stroke="#fff" d="M.5 1.500h3M1 0v3M3 0v3M2 3v3" />`)}</button><button aria-label="Pen">${icon(12, 11, svg`<path stroke="#ddd" d="M1 9.500q1.500-5 4-4.500c2 1-1.500 4-2.500 2.500s5-4 6-3.500-2 3-3 2.500M6 5.500 9.500 1l1.500 1-3.500 5" />`)}</button>
          <button class="lang">ENG</button><button class="clock"><span>11:42 PM</span><span>9/29/2020</span></button><button class="note" aria-label="Notifications">${icon(13, 13, svg`<path fill="#fff" stroke="none" d="M0 0h13v10H7l-3 3v-3H0z" /><path stroke="#444" d="M2 2.500h9M2 4.500h9M2 6.500h6" />`)}<span class="badge">1</span></button></div></div>`;
  }
}
